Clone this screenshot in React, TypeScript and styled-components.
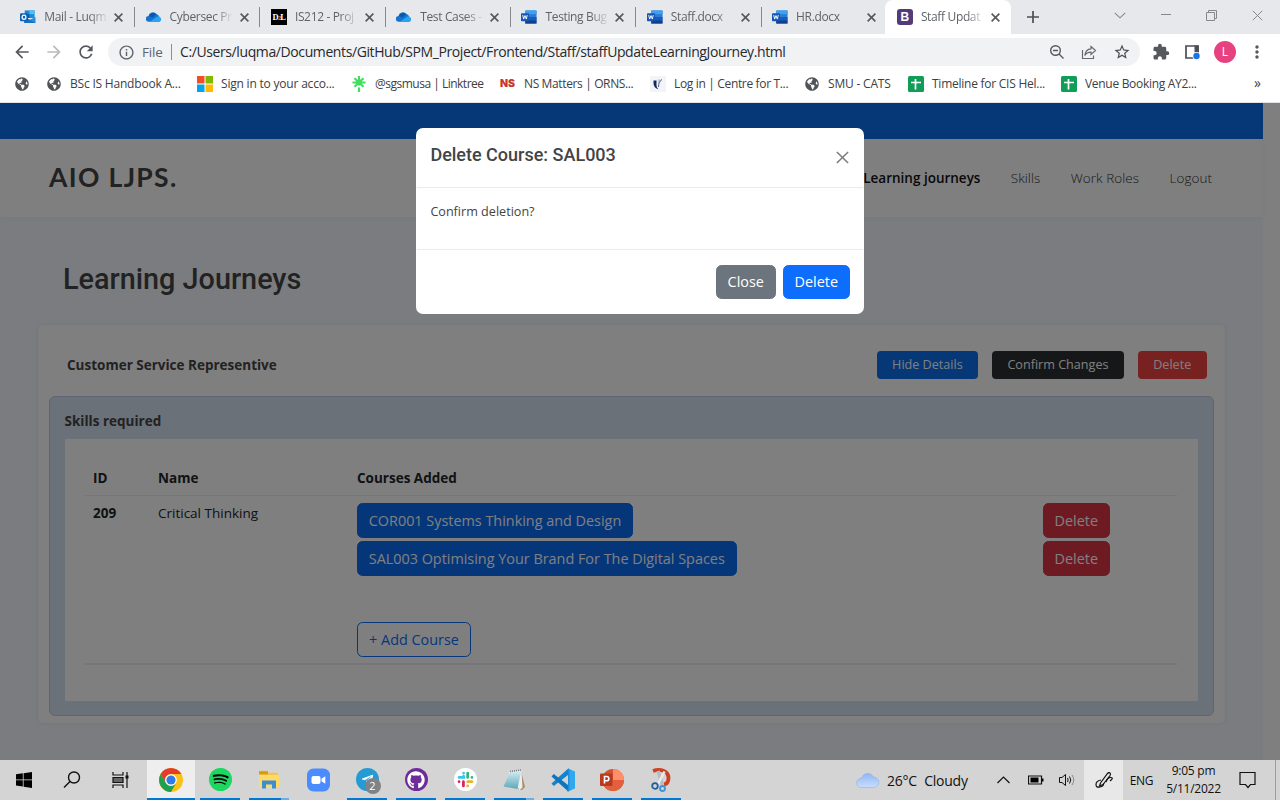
import React from 'react';
import styled, { createGlobalStyle } from 'styled-components';
import {
  MdArrowBack, MdArrowForward, MdRefresh, MdInfoOutline, MdStarBorder, MdExtension, MdMoreVert,
} from 'react-icons/md';
import { FaSpotify, FaGithub, FaTelegramPlane, FaGlobeAmericas } from 'react-icons/fa';

const Global = createGlobalStyle`
  * { box-sizing: border-box; }
  body { margin: 0; overflow: hidden; background: #fff; }
  svg { display: block; flex: none; }
  button { font-family: inherit; }
`;

const Screen = styled.div`
  width: 1280px;
  height: 800px;
  display: flex;
  flex-direction: column;
  font-family: 'Open Sans', 'Noto Sans', sans-serif;
`;

/* ---------- browser chrome ---------- */

const TabStrip = styled.div`
  height: 34px;
  background: #e7e8ec;
  display: flex;
  padding-left: 9.8px;
`;

const Tab = styled.div<{ $active?: boolean }>`
  flex: none;
  width: ${p => (p.$active ? 126 : 125.3)}px;
  height: 34px;
  margin-left: ${p => (p.$active ? -2 : 0)}px;
  padding: 0 0 0 ${p => (p.$active ? 12 : 10.5)}px;
  display: flex;
  align-items: center;
  background: ${p => (p.$active ? '#fff' : 'transparent')};
  border-radius: ${p => (p.$active ? '8px 8px 0 0' : '0')};
`;

const TabTitle = styled.span`
  width: 63px;
  margin-left: 8px;
  white-space: nowrap;
  font-size: 12px;
  line-height: 18px;
  color: #5f6368;
  letter-spacing: -0.35px;
  mask-image: linear-gradient(to right, #000 72%, rgba(0, 0, 0, 0.08) 100%);
`;

const TabClose = styled.span`
  width: 10px;
  margin-left: 7.5px;
`;

const TabDivider = styled.span`
  width: 1px;
  height: 20px;
  margin-left: 10px;
  background: #85888c;
`;

const NewTab = styled.div`
  width: 44px;
  display: grid;
  place-items: center;
`;

const WindowControls = styled.div`
  margin-left: auto;
  height: 30px;
  width: 183px;
  display: grid;
  grid-template-columns: repeat(4, 1fr);
  place-items: center;
`;

const Toolbar = styled.div`
  height: 36px;
  display: flex;
  align-items: center;
  padding: 0 12px 0 12px;
  background: #fff;
`;

const NavIcons = styled.div`
  width: 96px;
  display: flex;
  gap: 12px;
  color: #55585c;
`;

const Omnibox = styled.div`
  width: 1032px;
  height: 28px;
  border-radius: 14px;
  background: #f1f2f4;
  display: flex;
  align-items: center;
  padding: 0 9.5px 0 9.5px;
  color: #5f6368;
`;

const Scheme = styled.span`
  margin-left: 7.5px;
  width: 29px;
  font-size: 13.5px;
  letter-spacing: -0.2px;
`;

const Url = styled.span`
  padding-left: 8px;
  border-left: 1px solid #8a8d91;
  line-height: 16px;
  font-size: 14px;
  letter-spacing: -0.395px;
  color: #27292c;
  white-space: nowrap;
`;

const OmniActions = styled.div`
  margin-left: auto;
  display: flex;
  gap: 16px;
  align-items: center;
`;

const ToolbarActions = styled.div`
  flex: 1;
  margin-left: 12px;
  display: flex;
  align-items: center;
  gap: 14px;
  color: #55585c;
`;

const Avatar = styled.span`
  flex: none;
  width: 22px;
  height: 22px;
  border-radius: 50%;
  background: #e8417f;
  color: #fff;
  font-size: 12px;
  line-height: 22px;
  text-align: center;
  margin-left: -1px;
  margin-right: -3px;
`;

const Bookmarks = styled.div`
  height: 33px;
  display: flex;
  gap: 16px;
  padding: 0 0 5px 14px;
  border-bottom: 1px solid #dfe2e6;
  align-items: center;
  background: #fff;
`;

const Bookmark = styled.div<{ $w: number; $ls?: number }>`
  flex: none;
  width: ${p => p.$w}px;
  display: flex;
  gap: 8px;
  align-items: center;
  white-space: nowrap;
  font-size: 12px;
  letter-spacing: ${p => p.$ls ?? -0.2}px;
  color: #3c4043;
`;

const GlobeBox = styled.span`
  width: 16px;
  flex: none;
  display: grid;
  place-items: center;
  color: #505357;
`;

const NsMark = styled.b`
  width: 16px;
  font: 900 10.5px Inter, sans-serif;
  letter-spacing: -0.2px;
  color: #c9372c;
`;

const Overflow = styled.span`
  margin: 0 19px 2px auto;
  font-size: 14px;
  color: #3c4043;
`;

/* ---------- web page ---------- */

const Viewport = styled.div`
  position: relative;
  height: 657px;
  background: #fff;
`;

const Page = styled.div`
  width: 1263px;
  height: 657px;
  background: #f6f9ff;
`;

const TopBar = styled.div`
  height: 36px;
  background: #0d6eed;
`;

const Header = styled.header`
  height: 78px;
  padding: 0 51px 0 49px;
  display: flex;
  align-items: center;
  justify-content: space-between;
  background: #fff;
  box-shadow: 0 1px 8px rgba(18, 38, 99, 0.05);
`;

const Brand = styled.div`
  padding-bottom: 2px;
  font: 700 26.5px Lato, sans-serif;
  letter-spacing: 1.35px;
  color: #444;
`;

const Nav = styled.nav`
  display: flex;
  gap: 30.3px;
`;

const NavLink = styled.a<{ $active?: boolean }>`
  font-size: 13.5px;
  line-height: 20px;
  font-weight: ${p => (p.$active ? 600 : 300)};
  color: ${p => (p.$active ? '#111' : '#333')};
  letter-spacing: ${p => (p.$active ? 0 : 0.05)}px;
`;

const Title = styled.h1`
  margin: 0;
  padding: 42px 0 0 63px;
  height: 108px;
  font: 500 28.8px/40px Roboto, sans-serif;
  color: #444;
`;

const Card = styled.section`
  margin-left: 38px;
  width: 1187px;
  height: 398px;
  padding: 0 11px;
  border-radius: 5px;
  background: #fff;
  box-shadow: 0 0 4px rgba(1, 41, 112, 0.1);
`;

const CardHead = styled.div`
  height: 71px;
  padding: 8px 7.5px 0 18px;
  display: flex;
  gap: 14.3px;
  align-items: center;
`;

const CardName = styled.h2`
  margin: 0 auto 0 0;
  font-size: 13.5px;
  font-weight: 700;
  color: #444;
`;

const SmallButton = styled.button<{ $bg: string; $w: number }>`
  width: ${p => p.$w}px;
  height: 28px;
  padding: 0;
  border: 0;
  border-radius: 4px;
  background: ${p => p.$bg};
  color: #fff;
  font-size: 12.6px;
`;

const Panel = styled.div`
  height: 320px;
  padding: 11px 15px 14px 14.5px;
  border: 1px solid #bccbe2;
  border-radius: 6px;
  background: #d5e2f2;
`;

const PanelTitle = styled.h3`
  margin: 0;
  height: 31px;
  font-size: 13.5px;
  line-height: 27px;
  font-weight: 700;
  color: #444;
`;

const TableBox = styled.div`
  height: 262px;
  padding: 22px 22px 0 20px;
  background: #fff;
`;

const Table = styled.table`
  width: 1092px;
  table-layout: fixed;
  border-collapse: collapse;
  font-size: 13.5px;
  line-height: 20px;
  color: #212529;

  th, td {
    padding: 7px 8.5px;
    text-align: left;
    vertical-align: top;
    border-bottom: 1px solid #eaedf1;
  }
  tr > :first-child { font-weight: 700; }
  tbody td { padding-bottom: 6px; line-height: 21px; border-bottom: 2px solid #eaedf1; }
`;

const ButtonStack = styled.div`
  display: flex;
  flex-direction: column;
  align-items: flex-start;
  gap: 3.5px;
`;

const Button = styled.button<{ $bg?: string; $w: number; $push?: boolean }>`
  width: ${p => p.$w}px;
  height: 34.5px;
  padding: 0;
  margin-top: ${p => (p.$push ? 43 : 0)}px;
  border: 1px solid ${p => p.$bg ?? '#0d6efd'};
  border-radius: 5.5px;
  background: ${p => p.$bg ?? 'transparent'};
  color: ${p => (p.$bg ? '#fff' : '#0d6efd')};
  font-size: 14.4px;
  white-space: nowrap;
`;

/* ---------- modal ---------- */

const Backdrop = styled.div`
  position: absolute;
  inset: 0;
  padding-top: 25px;
  background: rgba(0, 0, 0, 0.5);
`;

const Dialog = styled.div`
  width: 448px;
  height: 186px;
  margin: 0 auto;
  border-radius: 7px;
  border: 1px solid rgba(255, 255, 255, 0.8);
  background: #fff;
  background-clip: border-box;
  color: #444;
`;

const DialogHead = styled.div`
  height: 59px;
  padding: 15px 14px 0 13.4px;
  display: flex;
  justify-content: space-between;
  border-bottom: 1px solid #e9ebee;
  svg { margin-top: 7px; }
`;

const DialogTitle = styled.h5`
  margin: 0;
  font: 500 18px/22px Roboto, sans-serif;
`;

const DialogBody = styled.div`
  height: 62px;
  padding: 14px 13.4px;
  border-bottom: 1px solid #e9ebee;
  font-size: 12.6px;
  line-height: 19px;
`;

const DialogFoot = styled.div`
  display: flex;
  justify-content: flex-end;
  gap: 7.5px;
  padding: 14.5px 13.5px;
`;

/* ---------- taskbar ---------- */

const Taskbar = styled.div`
  height: 40px;
  display: flex;
  background: #d4d4d4;
  color: #111;
`;

const StartArea = styled.div`
  width: 147px;
  display: grid;
  grid-template-columns: repeat(3, 48px);
  align-items: center;
  justify-items: center;
`;

const Apps = styled.div`
  display: flex;
  gap: 1px;
`;

const AppSlot = styled.div<{ $active?: boolean }>`
  width: 48px;
  height: 40px;
  display: flex;
  flex-direction: column;
  align-items: center;
  justify-content: space-between;
  padding-top: 8px;
  background: ${p => (p.$active ? '#eeeeee' : 'transparent')};
`;

const Underline = styled.span<{ $mode: 'full' | 'on' | 'multi' | 'off' }>`
  width: ${p => (p.$mode === 'full' ? 48 : 40)}px;
  height: 2px;
  background: ${p =>
    p.$mode === 'off' ? 'transparent'
      : p.$mode === 'multi' ? 'linear-gradient(to right, #0078d4 80%, #6bb0e4 80%)'
        : '#0078d4'};
`;

const Disc = styled.span<{ $bg: string }>`
  position: relative;
  width: 23px;
  height: 23px;
  border-radius: 50%;
  display: grid;
  place-items: center;
  background: ${p => p.$bg};
  color: #fff;
`;

const Count = styled.span`
  position: absolute;
  left: 9px;
  top: 10px;
  width: 16px;
  height: 16px;
  border-radius: 50%;
  background: #808285;
  font-size: 11px;
  line-height: 16px;
  text-align: center;
`;

const Tray = styled.div`
  margin-left: auto;
  display: flex;
  align-items: center;
  height: 40px;
  white-space: nowrap;
`;

const Weather = styled.div`
  width: 134px;
  display: flex;
  align-items: center;
  gap: 7px;
  font-size: 14px;
  word-spacing: 4px;
  letter-spacing: -0.25px;
`;

const TrayItem = styled.div<{ $w: number; $lit?: boolean; $after?: number }>`
  width: ${p => p.$w}px;
  height: 40px;
  margin-right: ${p => p.$after ?? 0}px;
  display: grid;
  place-items: center;
  background: ${p => (p.$lit ? '#e8e8e8' : 'transparent')};
  font-size: 12px;
  letter-spacing: -0.3px;
`;

const Clock = styled.div`
  width: 55px;
  font-size: 12px;
  line-height: 18px;
  letter-spacing: -0.25px;
  text-align: center;
`;

const DesktopEdge = styled.div`
  width: 5px;
  height: 40px;
  border-left: 1px solid #9c9c9c;
`;

/* ---------- icons ---------- */

const Cross = ({ s = 9, w = 1.6, c = '#55585c' }) => (
  <svg width={s} height={s} viewBox="0 0 10 10" stroke={c} strokeWidth={(w * 10) / s}>
    <path d="M.7.7 9.3 9.3M9.3.7.7 9.3" />
  </svg>
);

const Globe = () => <GlobeBox><FaGlobeAmericas size={14} /></GlobeBox>;

const Outlook = () => (
  <svg width="16" height="16" viewBox="0 0 17 16">
    <path d="M5 1h10.500v8H5z" fill="#1a8ad8" /><path d="M10 1h5.500v4H10z" fill="#4fc0f2" />
    <path d="M5 5h5v4H5z" fill="#0a5aa8" />
    <path d="M4.500 8 10.500 11 16.500 8v6.500H4.500z" fill="#2390dd" />
    <path d="M4.500 8v6.500h12z" fill="#1273c4" />
    <rect x="0" y="4" width="8.500" height="8.500" rx="1" fill="#0b63b8" />
    <ellipse cx="4.250" cy="8.250" rx="2" ry="2.200" fill="none" stroke="#fff" strokeWidth="1.300" />
  </svg>
);

const OneDrive = () => (
  <svg width="16" height="16" viewBox="0 0 17 16">
    <path d="M3 13a3 3 0 0 1-.4-6A4.800 4.800 0 0 1 11 4.800 3.800 3.800 0 0 1 14 8a2.700 2.700 0 0 1 0 5z" fill="#1273d0" />
    <path d="M3.200 7A4.800 4.800 0 0 1 11 4.900L7 8.500z" fill="#0b57ad" />
    <path d="M4 13 12 7.600a2.700 2.700 0 0 1 2 5.400z" fill="#2aa4ee" />
  </svg>
);

const Word = () => (
  <svg width="16" height="16" viewBox="0 0 17 16">
    <rect x="4.500" y="1" width="12" height="14" rx="1" fill="#2b7cd3" />
    <path d="M4.500 1h12v4h-12z" fill="#3f9ff0" /><path d="M4.500 8h12v3.500h-12z" fill="#185abd" />
    <path d="M4.500 11.500h12V15h-12z" fill="#103f91" />
    <rect x="0" y="4" width="8.500" height="8.500" rx=".8" fill="#1856b4" />
    <path d="m1.800 6 1 4.200L4.250 6.500l1.400 3.700 1-4.200" fill="none" stroke="#fff" strokeWidth="1" />
  </svg>
);

const D2LBox = styled.span`
  width: 16px;
  height: 16px;
  flex: none;
  background: #000;
  color: #fff;
  font: 700 8.5px/16px 'Liberation Serif', serif;
  letter-spacing: -0.6px;
  text-align: center;
  white-space: nowrap;
  i { font-size: 6px; font-style: normal; color: #f0a050; }
`;

const BootBox = styled.span`
  width: 16px;
  height: 16px;
  flex: none;
  border-radius: 3px;
  background: #533b78;
  color: #fff;
  font: 700 12px/16px 'Liberation Sans', sans-serif;
  text-align: center;
`;

const Sheets = () => (
  <svg width="16" height="16"><rect width="16" height="16" rx="1.500" fill="#109d58" />
    <path d="M3 6.500h10M7.500 3v10.500" stroke="#fff" strokeWidth="1.700" /></svg>
);

const Microsoft = () => (
  <svg width="16" height="16"><path d="M0 0h7.500v7.500H0z" fill="#f25022" /><path d="M8.500 0H16v7.500H8.500z" fill="#7fba00" />
    <path d="M0 8.500h7.500V16H0z" fill="#00a4ef" /><path d="M8.500 8.500H16V16H8.500z" fill="#ffb900" /></svg>
);

const Linktree = () => (
  <svg width="16" height="16" stroke="#41dd5f" strokeWidth="2.200"><path d="M8 0v9.500M8 11.500V16M1.500 6.500h13M3.500 2.200l9 8.600M12.500 2.200l-9 8.600" /></svg>
);

const Shield = () => (
  <svg width="16" height="16"><rect width="16" height="16" fill="#f3f4f7" /><path d="M3.500 4.500h3v4.500c0 2 .8 3 2 4.300C5.500 12.500 3.500 10.500 3.500 7z" fill="#14265e" />
    <path d="M7.500 3.500h3.500L8.500 8z" fill="#c3cbdc" /><path d="M12 3.500C9.500 5 8.500 7.500 8.500 11" fill="none" stroke="#4b5a86" /></svg>
);

const ZoomOut = () => (
  <svg width="16" height="16" fill="none" stroke="#55585c" strokeWidth="1.400"><circle cx="6.500" cy="6.500" r="4.800" /><path d="M4 6.500h5M10 10l4.500 4.500" /></svg>
);

const Share = () => (
  <svg width="16" height="16" fill="none" stroke="#66696d" strokeWidth="1.200"><path d="M1.500 6v8.500h11v-3" />
    <path d="M10 2.500 14.500 6.500 10 10.500V8.200C7 8.200 5 9.300 3.800 11.500 4.200 7.500 6.500 5 10 4.800z" /></svg>
);

const SidePanel = () => (
  <svg width="17" height="16"><path d="M2 2h12v12H2z" fill="#fff" stroke="#4b4e52" strokeWidth="1.700" />
    <path d="M10.500 1.500h4.300v7h-4.300z" fill="#4b4e52" /><circle cx="12.500" cy="12" r="4" fill="#fff" /><circle cx="12.500" cy="12" r="3.200" fill="#1a73e8" /></svg>
);

const Chrome = () => (
  <svg width="24" height="24" viewBox="0 0 24 24">
    <circle cx="12" cy="12" r="12" fill="#fbc116" />
    <path d="M1.610 6A12 12 0 0 1 22.390 6H12a6 6 0 0 0-5.200 9z" fill="#e33b2e" />
    <path d="M1.610 6A12 12 0 0 0 12 24l5.200-9A6 6 0 0 1 6.800 15z" fill="#1fa04f" />
    <circle cx="12" cy="12" r="5.800" fill="#fff" /><circle cx="12" cy="12" r="4.600" fill="#2f7bea" />
  </svg>
);

const Explorer = () => (
  <svg width="22" height="24"><path d="M1 4c0-1 .5-1.300 1.300-1.300H9l1.500 2H20V20H1z" fill="#f6c444" /><path d="M1 3.300h9v3H1z" fill="#d59b18" />
    <path d="M1 7h20v13H1z" fill="#ffd96a" /><path d="M4 20.500v-8h14v8h-4v-4H8v4z" fill="#3c8fcf" /></svg>
);

const ZoomApp = () => (
  <svg width="23" height="24"><rect y=".5" width="23" height="23" rx="6.500" fill="#4a8cff" /><rect x="4.500" y="8" width="9" height="8" rx="2" fill="#fff" />
    <path d="m14.500 10.800 3.800-2.600v7.600l-3.800-2.600z" fill="#fff" /></svg>
);

const Slack = () => (
  <svg width="17" height="17" viewBox="0 0 18 18" strokeWidth="2.900" strokeLinecap="round">
    <path d="M7 5.500V6.800H2.200M7 2.200h0" stroke="#36c5f0" fill="none" />
    <path d="M11.300 2.200V6.800M15.800 6.800h0" stroke="#2eb67d" />
    <path d="M11.300 11.300h4.500M11.300 15.800h0" stroke="#ecb22e" />
    <path d="M6.800 11.300v4.500M2.200 11.300h0" stroke="#e01e5a" />
  </svg>
);

const Notepad = () => (
  <svg width="24" height="24"><defs><linearGradient id="np" x1="0" y1="0" x2="0" y2="1"><stop stopColor="#cfeaf0" /><stop offset="1" stopColor="#5fa7b8" /></linearGradient></defs>
    <path d="m19 3 4 16-3 3-4-1z" fill="#a98d60" /><path d="m6.500 4 13-1.500 1 17-3 2.500z" fill="#e9eef0" /><path d="M8 4 19 3.500 15.500 21 1.500 18.500z" fill="url(#np)" />
    <path d="M8 3.500 19.500 2" stroke="#777" strokeWidth="1.500" strokeDasharray="1 1" /></svg>
);

const VsCode = () => (
  <svg width="24" height="24" viewBox="0 0 24 24"><path d="M.5 15.500 17 .700V7L2.800 18z" fill="#1483cf" /><path d="M.5 8.500 2.800 6 17 17v6.300z" fill="#0f75bd" />
    <path d="M17 .500 24 3.500v17L17 23.500z" fill="#2fa8ee" /><path d="M17 .500 18.500 1v22L17 23.500l-1.300-.6L17 20z" fill="#1f8fdb" /></svg>
);

const PowerPoint = () => (
  <svg width="24" height="24"><circle cx="13" cy="12" r="11" fill="#d35230" /><path d="M13 1a11 11 0 0 1 11 11H13z" fill="#ff8f6b" />
    <path d="M2 12a11 11 0 0 0 11 11 11 11 0 0 0 11-11z" fill="#e2603d" /><rect x="0" y="5.500" width="12.500" height="12.500" rx="1" fill="#b83b1d" />
    <path d="M4.500 15.500V8.500h2.200a2 2 0 0 1 0 4.300H4.500" fill="none" stroke="#fff" strokeWidth="1.600" /></svg>
);

const Snip = () => (
  <svg width="22" height="24" fill="none"><path d="M3 3c7-2.500 15.500-.5 15.500 7 0 4-2 6-4.500 6.500" stroke="#cf4020" strokeWidth="3.800" />
    <path d="m8 3 4.500 14" stroke="#b9bdc2" strokeWidth="3.500" /><path d="M14.500 3.500 7.500 17" stroke="#e8eaed" strokeWidth="2.500" />
    <circle cx="5" cy="18" r="2.800" stroke="#215f9f" strokeWidth="1.800" /><circle cx="12.500" cy="20.500" r="2.500" stroke="#3d93d3" strokeWidth="1.800" /></svg>
);

const WindowsLogo = () => (
  <svg width="16" height="16"><path d="M0 2.300 6.800 1.300v6.200H0zM7.600 1.200 16 0v7.500H7.600zM0 8.300h6.800v6.300L0 13.600zM7.600 8.300H16V16l-8.400-1.200z" /></svg>
);

const bookmarks: { icon: React.ReactNode; text: string; w: number; ls?: number }[] = [
  { icon: <Globe />, text: '', w: 16 },
  { icon: <Globe />, text: 'BSc IS Handbook A...', w: 135 },
  { icon: <Microsoft />, text: 'Sign in to your acco...', w: 138 },
  { icon: <Linktree />, text: '@sgsmusa | Linktree', w: 133, ls: -0.5 },
  { icon: <NsMark>NS</NsMark>, text: 'NS Matters | ORNS...', w: 134, ls: -0.37 },
  { icon: <Shield />, text: 'Log in | Centre for T...', w: 138, ls: -0.34 },
  { icon: <Globe />, text: 'SMU - CATS', w: 88 },
  { icon: <Sheets />, text: 'Timeline for CIS Hel...', w: 137, ls: -0.25 },
  { icon: <Sheets />, text: 'Venue Booking AY2...', w: 137, ls: -0.3 },
];

const tabs = [
  { icon: <Outlook />, text: 'Mail - Luqm' },
  { icon: <OneDrive />, text: 'Cybersec Pr' },
  { icon: <D2LBox>D<i>2</i>L</D2LBox>, text: 'IS212 - Proj' },
  { icon: <OneDrive />, text: 'Test Cases -' },
  { icon: <Word />, text: 'Testing Bug' },
  { icon: <Word />, text: 'Staff.docx' },
  { icon: <Word />, text: 'HR.docx' },
];

const apps: { icon: React.ReactNode; mode: 'full' | 'on' | 'multi' | 'off' }[] = [
  { icon: <Chrome />, mode: 'full' },
  { icon: <Disc $bg="radial-gradient(#000 60%, #1ed760 62%)"><FaSpotify size={23} color="#1ed760" /></Disc>, mode: 'on' },
  { icon: <Explorer />, mode: 'multi' },
  { icon: <ZoomApp />, mode: 'off' },
  { icon: <Disc $bg="#259bd6"><FaTelegramPlane size={13} /><Count>2</Count></Disc>, mode: 'on' },
  { icon: <Disc $bg="#6e2b9a"><FaGithub size={18} /></Disc>, mode: 'on' },
  { icon: <Disc $bg="#fff"><Slack /></Disc>, mode: 'on' },
  { icon: <Notepad />, mode: 'multi' },
  { icon: <VsCode />, mode: 'on' },
  { icon: <PowerPoint />, mode: 'on' },
  { icon: <Snip />, mode: 'on' },
];

const BrowserChrome = () => (
  <>
    <TabStrip>
      {tabs.map((t, i) => (
        <Tab key={t.text}>
          {t.icon}
          <TabTitle>{t.text}</TabTitle>
          <TabClose><Cross /></TabClose>
          {i < 6 && <TabDivider />}
        </Tab>
      ))}
      <Tab $active>
        <BootBox>B</BootBox>
        <TabTitle>Staff Updat</TabTitle>
        <TabClose><Cross /></TabClose>
      </Tab>
      <NewTab><svg width="12" height="12" stroke="#4b4e52" strokeWidth="1.700"><path d="M6 0v12M0 6h12" /></svg></NewTab>
      <WindowControls>
        <svg width="12" height="7" fill="none" stroke="#85888c" strokeWidth="1.100"><path d="m.8.8 5.200 5 5.200-5" /></svg>
        <svg width="10" height="2"><path d="M0 0h10v1H0z" fill="#85888c" /></svg>
        <svg width="11" height="11" fill="none" stroke="#85888c"><path d="M.5 2.500h8v8h-8zM2.500 2.500v-2h8v8h-2" /></svg>
        <Cross s={11} w={1} c="#85888c" />
      </WindowControls>
    </TabStrip>
    <Toolbar>
      <NavIcons>
        <MdArrowBack size={20} /><MdArrowForward size={20} color="#b9bbbe" /><MdRefresh size={20} />
      </NavIcons>
      <Omnibox>
        <MdInfoOutline size={17} />
        <Scheme>File</Scheme>
        <Url>C:/Users/luqma/Documents/GitHub/SPM_Project/Frontend/Staff/staffUpdateLearningJourney.html</Url>
        <OmniActions><ZoomOut /><Share /><MdStarBorder size={18} color="#4b4e52" /></OmniActions>
      </Omnibox>
      <ToolbarActions>
        <MdExtension size={18} /><SidePanel />
        <Avatar>L</Avatar>
        <MdMoreVert size={20} />
      </ToolbarActions>
    </Toolbar>
    <Bookmarks>
      {bookmarks.map((b, i) => (
        <Bookmark key={i} $w={b.w} $ls={b.ls}>{b.icon}{b.text}</Bookmark>
      ))}
      <Overflow>»</Overflow>
    </Bookmarks>
  </>
);

const DeleteDialog = () => (
  <Backdrop>
    <Dialog>
      <DialogHead>
        <DialogTitle>Delete Course: SAL003</DialogTitle>
        <Cross s={13} w={1.5} c="#7b7b7b" />
      </DialogHead>
      <DialogBody>Confirm deletion?</DialogBody>
      <DialogFoot>
        <Button $bg="#6c757d" $w={59.5}>Close</Button>
        <Button $bg="#0d6efd" $w={66.5}>Delete</Button>
      </DialogFoot>
    </Dialog>
  </Backdrop>
);

const JourneysPage = () => (
  <Page>
    <TopBar />
    <Header>
      <Brand>AIO LJPS.</Brand>
      <Nav>
        <NavLink $active>Learning journeys</NavLink>
        <NavLink>Skills</NavLink>
        <NavLink>Work Roles</NavLink>
        <NavLink>Logout</NavLink>
      </Nav>
    </Header>
    <Title>Learning Journeys</Title>
    <Card>
      <CardHead>
        <CardName>Customer Service Representive</CardName>
        <SmallButton $bg="#0d6eed" $w={101}>Hide Details</SmallButton>
        <SmallButton $bg="#2b2e30" $w={131.5}>Confirm Changes</SmallButton>
        <SmallButton $bg="#ee4343" $w={68.5}>Delete</SmallButton>
      </CardHead>
      <Panel>
        <PanelTitle>Skills required</PanelTitle>
        <TableBox>
          <Table>
            <colgroup><col width="65" /><col width="199" /><col width="686" /><col /></colgroup>
            <thead><tr><th>ID</th><th>Name</th><th>Courses Added</th><th /></tr></thead>
            <tbody>
              <tr>
                <td>209</td>
                <td>Critical Thinking</td>
                <td>
                  <ButtonStack>
                    <Button $bg="#0a6cf5" $w={276}>COR001 Systems Thinking and Design</Button>
                    <Button $bg="#0a6cf5" $w={379.5}>SAL003 Optimising Your Brand For The Digital Spaces</Button>
                    <Button $w={114} $push>+ Add Course</Button>
                  </ButtonStack>
                </td>
                <td>
                  <ButtonStack>
                    <Button $bg="#dc3545" $w={66.5}>Delete</Button>
                    <Button $bg="#dc3545" $w={66.5}>Delete</Button>
                  </ButtonStack>
                </td>
              </tr>
            </tbody>
          </Table>
        </TableBox>
      </Panel>
    </Card>
  </Page>
);

const SystemTray = () => (
  <Tray>
    <Weather>
      <svg width="24" height="18"><defs><linearGradient id="cl" x1="0" y1="0" x2="0" y2="1"><stop stopColor="#8fb6f5" /><stop offset="1" stopColor="#c9ddfb" /></linearGradient></defs>
        <path d="M5 16.500a4.600 4.600 0 0 1 .5-9.200A6.300 6.300 0 0 1 17.300 6 5.300 5.300 0 0 1 18.500 16.500z" fill="url(#cl)" stroke="#86abe9" strokeWidth=".5" /></svg>
      26°C Cloudy
    </Weather>
    <TrayItem $w={26}><svg width="13" height="8" fill="none" stroke="#111" strokeWidth="1.200"><path d="m.5 7 6-6 6 6" /></svg></TrayItem>
    <TrayItem $w={40}><svg width="16" height="10"><path d="M.5 1h13v8H.5z" fill="none" stroke="#111" strokeWidth="1.200" /><path d="M2.500 2.500h8v5h-8zM14 3.500h1.500v3H14z" /></svg></TrayItem>
    <TrayItem $w={22} $after={6}><svg width="17" height="14" fill="none" stroke="#111"><path d="M.5 4.500h2.500l3.500-3v11l-3.500-3h-2.500zM8.500 5q1.300 2 0 4M10.500 3.500q2.500 3.500 0 7" /><path d="M13 2q3.500 5 0 10" stroke="#888" /></svg></TrayItem>
    <TrayItem $w={39} $lit>
      <svg width="18" height="18" fill="none" stroke="#111" strokeWidth="1.200"><path d="M5.500 12 12.500 2.500q1.500-1.500 2.500-.5t0 2.500L8 13.500 4.500 15z" /><path d="M6 9Q1 10 1 13.500t4 2.500 3.500-3.500M11 11q2-5 5-4.500T15 10" /></svg>
    </TrayItem>
    <TrayItem $w={37} $after={6}>ENG</TrayItem>
    <Clock>9:05 pm<br />5/11/2022</Clock>
    <TrayItem $w={54}>
      <svg width="18" height="18" fill="none" stroke="#111" strokeWidth="1.200"><path d="M1 1.500h15v12h-4.500L9 16.500 6.500 13.500H1z" /></svg>
    </TrayItem>
    <DesktopEdge />
  </Tray>
);

export default function App() {
  return (
    <Screen>
      <Global />
      <BrowserChrome />
      <Viewport>
        <JourneysPage />
        <DeleteDialog />
      </Viewport>
      <Taskbar>
        <StartArea>
          <WindowsLogo />
          <svg width="18" height="18" fill="none" stroke="#111" strokeWidth="1.400"><circle cx="11" cy="6.500" r="5.500" /><path d="M7 10.500 1 16.500" /></svg>
          <svg width="17" height="16" fill="none" stroke="#111" strokeWidth="1.200"><path d="M1 0v3h10V0M1 16v-3h10v3M15 0v16" /><path d="M1 5.500h10v5H1z" fill="#666" /><path d="M13.500 5h3" strokeWidth="3" /></svg>
        </StartArea>
        <Apps>
          {apps.map((a, i) => (
            <AppSlot key={i} $active={a.mode === 'full'}>{a.icon}<Underline $mode={a.mode} /></AppSlot>
          ))}
        </Apps>
        <SystemTray />
      </Taskbar>
    </Screen>
  );
}
